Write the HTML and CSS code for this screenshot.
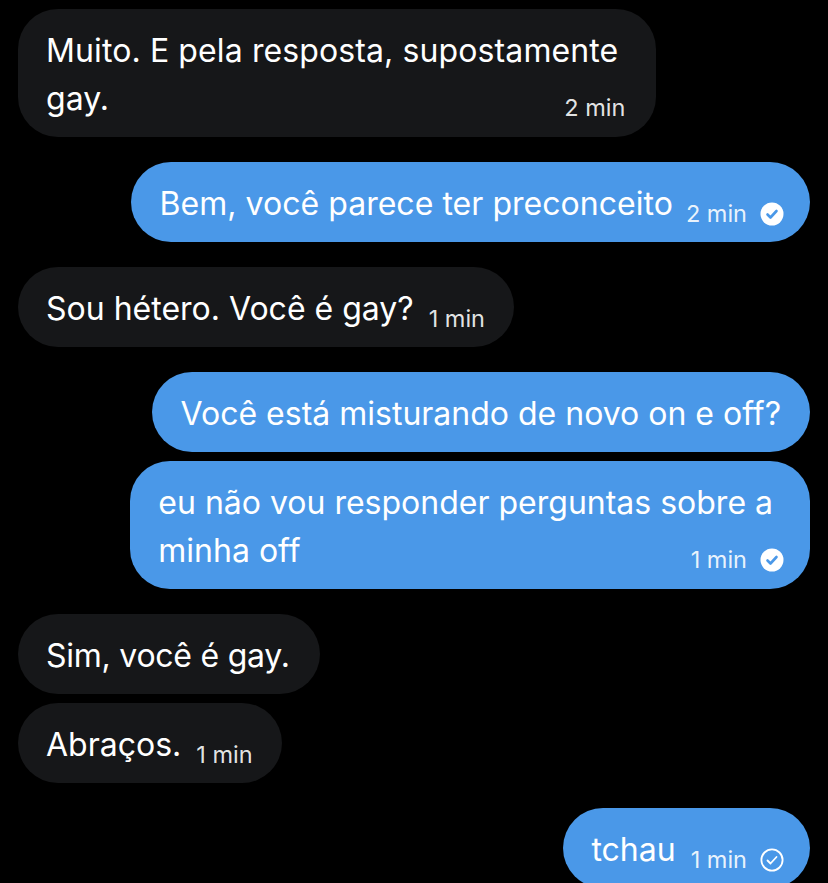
FILE: index.html
```html
<!DOCTYPE html>
<html lang="pt">
<head>
<meta charset="utf-8">
<title>Conversa</title>
<link rel="stylesheet" href="styles.css">
</head>
<body>
<main class="chat">
  <div class="bubble in wrapped wide gap-first">
    <div class="line">Muito. E pela resposta, supostamente</div>
    <div class="line split"><span>gay.</span><span class="meta low overhang-in">2 min</span></div>
  </div>
  <div class="bubble out stretched gap-group">
    <div class="line"><span>Bem, você parece ter preconceito</span><span class="meta drop">2 min<svg class="tick" viewBox="0 0 24 24"><circle cx="12" cy="12" r="11.5" fill="#fff"/><path d="M7.5 12.5l3 3 6-6.5" fill="none" stroke="#4a98e8" stroke-width="2.6" stroke-linecap="round" stroke-linejoin="round"/></svg></span></div>
  </div>
  <div class="bubble in gap-group">
    <div class="line"><span>Sou hétero. Você é gay?</span><span class="meta drop">1 min</span></div>
  </div>
  <div class="bubble out plain gap-group">
    <div class="line">Você está misturando de novo on e off?</div>
  </div>
  <div class="bubble out wrapped gap-near">
    <div class="line">eu não vou responder perguntas sobre a</div>
    <div class="line split"><span>minha off</span><span class="meta low overhang-out">1 min<svg class="tick" viewBox="0 0 24 24"><circle cx="12" cy="12" r="11.5" fill="#fff"/><path d="M7.5 12.5l3 3 6-6.5" fill="none" stroke="#4a98e8" stroke-width="2.6" stroke-linecap="round" stroke-linejoin="round"/></svg></span></div>
  </div>
  <div class="bubble in tight gap-group">
    <div class="line">Sim, você é gay.</div>
  </div>
  <div class="bubble in gap-near">
    <div class="line"><span>Abraços.</span><span class="meta drop">1 min</span></div>
  </div>
  <div class="bubble out gap-group">
    <div class="line"><span>tchau</span><span class="meta drop">1 min<svg class="tick" viewBox="0 0 24 24"><circle cx="12" cy="12" r="10.6" fill="none" stroke="#fff" stroke-width="1.8"/><path d="M7.5 12.5l3 3 6-6.5" fill="none" stroke="#fff" stroke-width="1.8" stroke-linecap="round" stroke-linejoin="round"/></svg></span></div>
  </div>
</main>
</body>
</html>
```
FILE: styles.css
```css
* { box-sizing: border-box; }
html, body { margin: 0; height: 883px; overflow: hidden; background: #000; }
.chat {
  display: flex;
  flex-direction: column;
  padding: 0 18px;
  font-family: Inter, "Liberation Sans", sans-serif;
  font-size: 32px;
  color: #fff;
}
.bubble {
  padding: 18px 26px 14px 28px;
  border-radius: 40px;
}
.in { align-self: flex-start; background: #161719; padding-right: 29px; }
.out { align-self: flex-end; background: #4a98e8; }
.plain { padding-left: 29px; padding-right: 29px; }
.wrapped { padding-right: 38px; }
.out.wrapped { padding-right: 37px; }
.wide .line:first-child { letter-spacing: .11px; }
.tight { padding-right: 30px; }
.tight .line { letter-spacing: -.25px; }
.stretched { padding-left: 29px; }
.stretched .line { letter-spacing: .03px; }
.stretched .meta { margin-left: 13px; }
.gap-first { margin-top: 9px; }
.gap-group { margin-top: 25px; }
.gap-near { margin-top: 9px; }
.line {
  display: flex;
  align-items: baseline;
  height: 48px;
  line-height: 48px;
  white-space: nowrap;
}
.split { justify-content: space-between; }
.meta {
  display: inline-flex;
  align-items: center;
  gap: 13px;
  margin-left: 15px;
  font-size: 23.5px;
  line-height: 28px;
  letter-spacing: 0;
  color: rgba(255,255,255,.9);
}
.drop { position: relative; top: 7px; }
.low { position: relative; top: 6px; }
.overhang-in { margin-right: -7px; }
.overhang-out { margin-right: -11px; }
.tick { width: 24px; height: 24px; }
```
